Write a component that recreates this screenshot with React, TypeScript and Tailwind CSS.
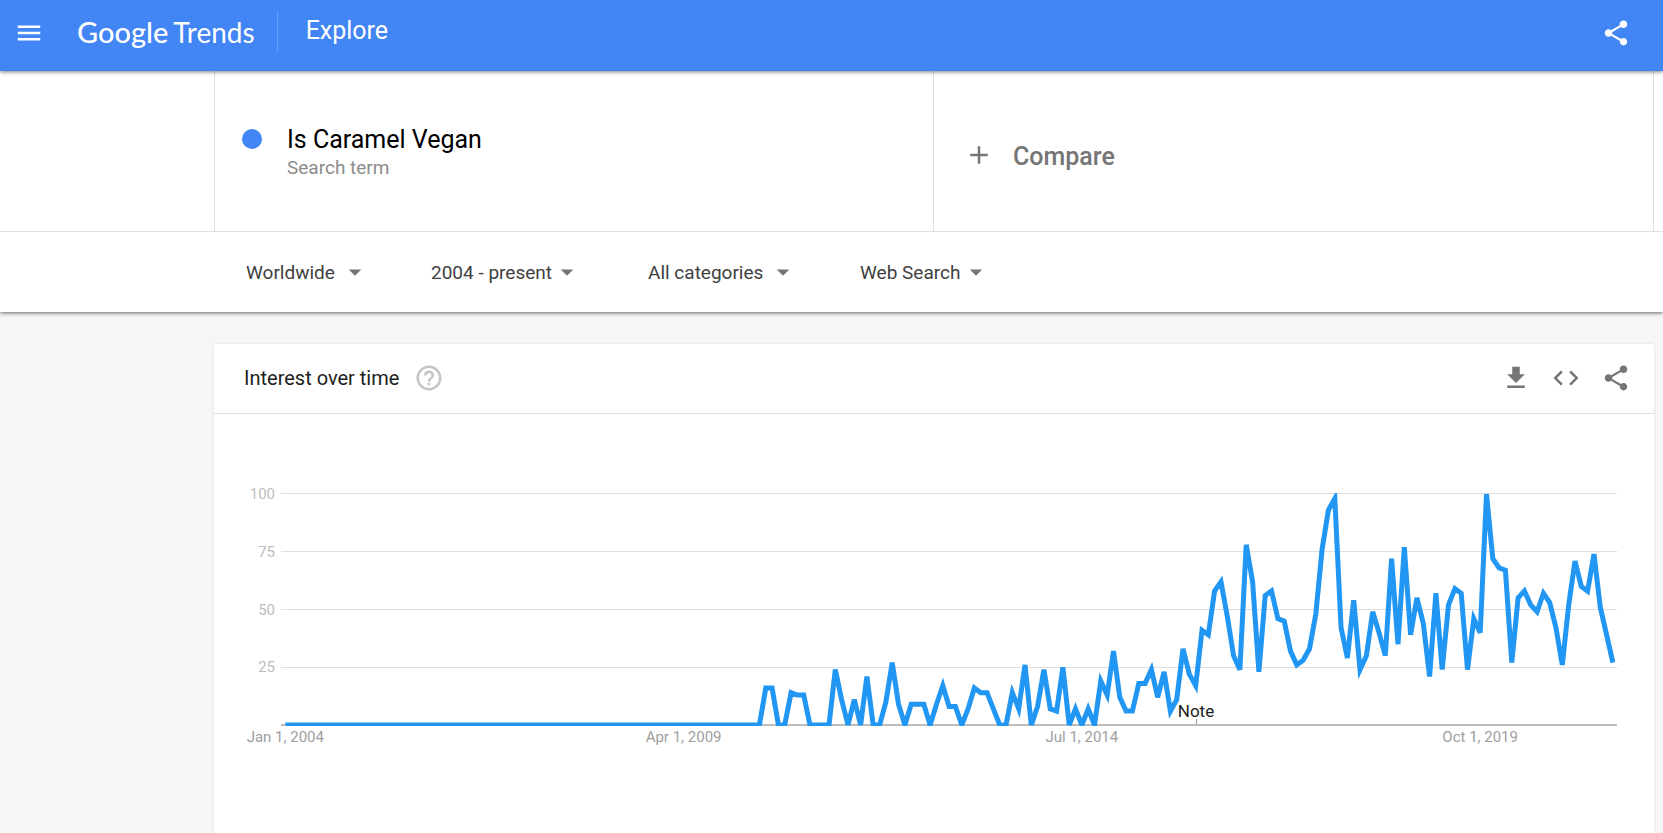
import React from 'react';

const ICONS = {
  menu: 'M3 18h18v-2H3v2zm0-5h18v-2H3v2zm0-7v2h18V6H3z',
  share:
    'M18 16.08c-.76 0-1.44.3-1.96.77L8.91 12.7c.05-.23.09-.46.09-.7s-.04-.47-.09-.7l7.05-4.11c.54.5 1.25.81 2.04.81 1.66 0 3-1.34 3-3s-1.34-3-3-3-3 1.34-3 3c0 .24.04.47.09.7L8.04 9.81C7.5 9.31 6.79 9 6 9c-1.66 0-3 1.34-3 3s1.34 3 3 3c.79 0 1.5-.31 2.04-.81l7.12 4.16c-.05.21-.08.43-.08.65 0 1.61 1.31 2.92 2.92 2.92 1.61 0 2.92-1.31 2.92-2.92s-1.31-2.92-2.92-2.92z',
  add: 'M19 13h-6v6h-2v-6H5v-2h6V5h2v6h6v2z',
  dropDown: 'M7 10l5 5 5-5z',
  help: 'M11 18h2v-2h-2v2zm1-16C6.48 2 2 6.48 2 12s4.48 10 10 10 10-4.48 10-10S17.52 2 12 2zm0 18c-4.41 0-8-3.59-8-8s3.59-8 8-8 8 3.59 8 8-3.59 8-8 8zm0-14c-2.21 0-4 1.79-4 4h2c0-1.1.9-2 2-2s2 .9 2 2c0 2-3 1.75-3 5h2c0-2.25 3-2.5 3-5 0-2.21-1.79-4-4-4z',
  download: 'M19 9h-4V3H9v6H5l7 7 7-7zM5 18v2h14v-2H5z',
  code: 'M9.4 16.6L4.8 12l4.6-4.6L8 6l-6 6 6 6 1.4-1.4zm5.2 0l4.6-4.6-4.6-4.6L16 6l6 6-6 6-1.4-1.4z',
};

function Icon({ name, className = '' }: { name: keyof typeof ICONS; className?: string }) {
  return (
    <svg viewBox="0 0 24 24" aria-hidden="true" className={`size-[30px] shrink-0 fill-current ${className}`}>
      <path d={ICONS[name]} />
    </svg>
  );
}

function IconButton({ name, label }: { name: keyof typeof ICONS; label: string }) {
  return (
    <button type="button" aria-label={label} className="cursor-pointer">
      <Icon name={name} />
    </button>
  );
}

const FILTERS = [
  { label: 'Location', value: 'Worldwide', width: 'w-[124px]' },
  { label: 'Time range', value: '2004 - present', width: 'w-[151px]' },
  { label: 'Category', value: 'All categories', width: 'w-[150px]' },
  { label: 'Search type', value: 'Web Search', width: 'w-[131px]' },
];

function Filter({ label, value, width }: (typeof FILTERS)[number]) {
  return (
    <div className={`relative flex items-center ${width}`}>
      <select
        aria-label={label}
        className="w-full cursor-pointer appearance-none bg-transparent pt-[2px] text-[19px] leading-6 text-[#404040]"
      >
        <option>{value}</option>
      </select>
      <Icon name="dropDown" className="pointer-events-none absolute right-0 text-[#757575]" />
    </div>
  );
}

/* Monthly interest, January 2004 to July 2021; nothing was recorded for the first 76 months. */
const INTEREST: number[] = [
  ...Array<number>(76).fill(0),
  16, 16, 0, 0, 14, 13, 13, 0, 0, 0, 0, 24, 11, 0, 11, 0, 21, 0, 0, 10,
  27, 9, 0, 9, 9, 9, 0, 9, 17, 8, 8, 0, 7, 16, 14, 14, 7, 0, 0, 14,
  7, 26, 0, 8, 24, 7, 6, 25, 0, 7, 0, 7, 0, 19, 13, 32, 12, 6, 6, 18,
  18, 24, 12, 23, 6, 11, 33, 22, 17, 41, 39, 58, 62, 47, 30, 24, 78, 62, 23, 56,
  58, 46, 45, 32, 26, 28, 33, 48, 76, 93, 98, 42, 29, 54, 24, 30, 49, 40, 30, 72,
  35, 77, 39, 55, 44, 21, 57, 24, 52, 59, 57, 24, 46, 40, 100, 72, 68, 67, 27, 55,
  58, 52, 49, 57, 53, 42, 26, 52, 71, 60, 58, 74, 51, 39, 27,
];

const LEFT = 67;
const RIGHT = 1403;
const BASE = 311;
const TOP = 80;
const xOf = (month: number) => 71.3 + month * 6.322;
const yOf = (value: number) => BASE - (value * (BASE - TOP)) / 100;

const DATES = [
  { month: 0, label: 'Jan 1, 2004' },
  { month: 63, label: 'Apr 1, 2009' },
  { month: 126, label: 'Jul 1, 2014' },
  { month: 189, label: 'Oct 1, 2019' },
];

function InterestChart() {
  const points = INTEREST.map((value, month) => `${xOf(month).toFixed(1)},${yOf(value).toFixed(1)}`).join(' ');
  return (
    <svg viewBox="0 0 1440 360" role="img" aria-label="Interest over time" className="h-auto w-full">
      <defs>
        <clipPath id="plot">
          <rect x={LEFT} y={TOP - 1} width={RIGHT - LEFT} height={BASE - TOP + 2} />
        </clipPath>
      </defs>
      {[25, 50, 75, 100].map((value) => (
        <g key={value}>
          <rect x={LEFT} y={Math.ceil(yOf(value)) - 1} width={RIGHT - LEFT} height={1} fill="#dedede" />
          <text x={61} y={yOf(value) + 5} textAnchor="end" className="fill-[#bdbdbd] text-[15px]">
            {value}
          </text>
        </g>
      ))}
      <rect x={LEFT} y={BASE - 1} width={RIGHT - LEFT} height={2} fill="#bdbdbd" />
      <rect x={982} y={BASE - 6} width={1} height={6} fill="#9e9e9e" />
      <polyline points={points} clipPath="url(#plot)" fill="none" stroke="#2196f3" strokeWidth={5} />
      <text x={982} y={303} textAnchor="middle" className="fill-[#212121] text-[17px]">
        Note
      </text>
      {DATES.map(({ month, label }) => (
        <text key={label} x={xOf(month)} y={328} textAnchor="middle" className="fill-[#9e9e9e] text-[15px]">
          {label}
        </text>
      ))}
    </svg>
  );
}

export default function App() {
  return (
    <div className="flex min-h-screen flex-col bg-[#f6f6f6] font-[Roboto,sans-serif]">
      <header className="relative z-20 flex h-[71px] items-start bg-[#4285f4] pr-8 pl-[14px] text-white shadow-[0_1px_4px_rgba(0,0,0,0.5)]">
        <div className="flex h-[66px] items-center">
          <IconButton name="menu" label="Main menu" />
          <a
            href="#"
            className="ml-[33px] flex items-baseline gap-[5px] pb-[2px] font-[Lato,sans-serif] leading-8"
          >
            <span className="text-[29px] font-medium">Google</span>
            <span className="text-[28px]">Trends</span>
          </a>
        </div>
        <div className="mt-[11px] ml-[22px] h-[41px] w-px bg-white/20" />
        <h1 className="mt-[15px] ml-7 text-[25px] leading-8">Explore</h1>
        <div className="ml-auto flex h-[66px] items-center">
          <IconButton name="share" label="Share" />
        </div>
      </header>

      <section className="relative z-10 bg-white shadow-[0_1px_4px_rgba(0,0,0,0.6)]">
        <div className="border-b border-[#dedede] pr-[9px] pl-[214px]">
          <div className="grid h-[160px] grid-cols-2 border-x border-[#dedede]">
            <div className="flex items-start gap-[25px] border-r border-[#dedede] pt-[53px] pl-[27px]">
              <span className="mt-[5px] size-5 rounded-full bg-[#4285f4]" />
              <div>
                <h2 className="text-[25px] leading-8 text-black">Is Caramel Vegan</h2>
                <p className="text-[19px] leading-6 text-[#8c8c8c]">Search term</p>
              </div>
            </div>
            <button
              type="button"
              className="flex cursor-pointer items-center gap-[19px] pt-2 pl-[30px] text-[25px] leading-8 font-medium text-[#757575]"
            >
              <Icon name="add" />
              <span className="pt-1">Compare</span>
            </button>
          </div>
        </div>
        <div className="grid h-20 grid-cols-[185px_217px_212px_auto] items-center pl-[246px]">
          {FILTERS.map((filter) => (
            <Filter key={filter.label} {...filter} />
          ))}
        </div>
      </section>

      <main className="flex flex-1 flex-col pt-8 pr-[9px] pl-[214px]">
        <section className="flex-1 rounded-t-[3px] bg-white shadow-[0_0_3px_rgba(0,0,0,0.12)]">
          <div className="flex h-[70px] items-center border-b border-[#dedede] pr-[23px] pb-[2px] pl-[30px]">
            <h2 className="text-[20px] leading-6 text-[#212121]">Interest over time</h2>
            <div className="ml-[15px] flex text-[#c4c4c4]">
              <IconButton name="help" label="Help" />
            </div>
            <div className="ml-auto flex gap-5 text-[#757575]">
              <IconButton name="download" label="Download" />
              <IconButton name="code" label="Embed" />
              <IconButton name="share" label="Share chart" />
            </div>
          </div>
          <InterestChart />
        </section>
      </main>
    </div>
  );
}
